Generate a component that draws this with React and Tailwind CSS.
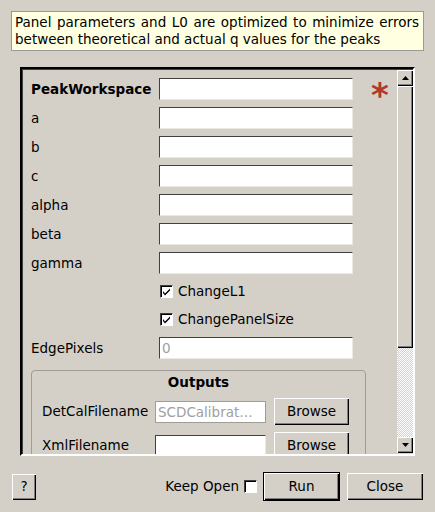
import React from "react";

const raised =
  "bg-[#d4d0c8] shadow-[inset_1px_1px_0_#ffffff,inset_-1px_-1px_0_#000000,inset_-2px_-2px_0_#808080]";
const sunken =
  "bg-white border border-t-[#404040] border-l-[#404040] border-r-[#ece9e4] border-b-[#ece9e4]";

const params = [
  { label: "PeakWorkspace", bold: true, star: true },
  { label: "a" },
  { label: "b" },
  { label: "c" },
  { label: "alpha" },
  { label: "beta" },
  { label: "gamma" },
];

const Arrow = ({ up }) => (
  <svg width="7" height="4" viewBox="0 0 7 4">
    <path d={up ? "M3.5 0L7 4H0Z" : "M0 0H7L3.5 4Z"} fill="#000" />
  </svg>
);

const Check = ({ checked }) => (
  <div className="w-[13px] h-[13px] shrink-0 bg-white border border-t-[#404040] border-l-[#404040] border-r-[#ffffff] border-b-[#ffffff] shadow-[inset_1px_1px_0_#000] flex items-center justify-center">
    {checked && (
      <svg width="9" height="9" viewBox="0 0 9 9">
        <path d="M1 4l2 2.5L8 1.5V3.5L3 8.5 1 6Z" fill="#000" />
      </svg>
    )}
  </div>
);

export default function App() {
  return (
    <div
      className="w-[435px] h-[512px] bg-[#d4d0c8] text-black text-[13.5px] overflow-hidden"
      style={{ fontFamily: '"DejaVu Sans", sans-serif' }}
    >
      {/* description */}
      <div className="ml-[11px] mt-[11px] w-[413px] h-[40px] bg-[#ffffe1] border border-[#9a9a94] pl-[3px] pt-[2px] leading-[17px]">
        <div className="w-[404px] text-justify [text-align-last:justify]">
          Panel parameters and L0 are optimized to minimize errors
        </div>
        <div className="whitespace-nowrap">between theoretical and actual q values for the peaks</div>
      </div>

      {/* scroll area */}
      <div className="ml-[20px] mt-[16px] w-[395px] h-[389px] flex border-2 border-t-[#000] border-l-[#000] border-r-[#fff] border-b-[#fff] shadow-[inset_1px_1px_0_#404040] overflow-hidden">
        <div className="flex-1 pl-[9px] pt-[9px]">
          {params.map((p) => (
            <div key={p.label} className="flex items-center h-[22px] mb-[7px]">
              <div className={"w-[128px] " + (p.bold ? "font-bold" : "")}>{p.label}</div>
              <div className={sunken + " w-[194px] h-[22px]"} />
              {p.star && (
                <div className="ml-[18px] text-[#b0392b] text-[34px] font-bold leading-none mt-[11px]">*</div>
              )}
            </div>
          ))}
          <div className="flex items-center h-[21px] mb-[7px] pl-[129px] gap-[5px]">
            <Check checked />
            <span>ChangeL1</span>
          </div>
          <div className="flex items-center h-[21px] mb-[7px] pl-[129px] gap-[5px]">
            <Check checked />
            <span>ChangePanelSize</span>
          </div>
          <div className="flex items-center h-[22px]">
            <div className="w-[128px]">EdgePixels</div>
            <div className={sunken + " w-[194px] h-[22px] pl-[2px] text-[#a0a0a0] leading-[20px]"}>0</div>
          </div>

          {/* outputs group */}
          <div className="mt-[11px] w-[335px] border border-[#a09d96] rounded-[4px] pb-[20px]">
            <div className="text-center font-bold pt-[3px] leading-[17px]">Outputs</div>
            <div className="flex items-center pl-[10px] mt-[7px] h-[27px]">
              <div className="w-[113px]">DetCalFilename</div>
              <div className="w-[111px] h-[22px] bg-white border border-[#a09d96] pl-[2px] text-[#a0a0a0] leading-[20px] whitespace-nowrap overflow-hidden">
                SCDCalibrat…
              </div>
              <div className={raised + " ml-[8px] w-[75px] h-[27px] flex items-center justify-center"}>Browse</div>
            </div>
            <div className="flex items-center pl-[10px] mt-[7px] h-[27px]">
              <div className="w-[113px]">XmlFilename</div>
              <div className={sunken + " w-[111px] h-[22px]"} />
              <div className={raised + " ml-[8px] w-[75px] h-[27px] flex items-center justify-center"}>Browse</div>
            </div>
          </div>
        </div>

        {/* scrollbar */}
        <div className="w-[16px] flex flex-col pt-[1px] pb-[1px]">
          <div className={raised + " h-[16px] shrink-0 flex items-center justify-center"}>
            <Arrow up />
          </div>
          <div className={raised + " h-[262px] shrink-0"} />
          <div className="flex-1 bg-[repeating-conic-gradient(#ffffff_0_25%,#d4d0c8_0_50%)] bg-[length:2px_2px]" />
          <div className={raised + " h-[16px] shrink-0 flex items-center justify-center"}>
            <Arrow />
          </div>
        </div>
      </div>

      {/* footer */}
      <div className="flex items-center mt-[16px] pl-[12px] pr-[12px]">
        <div className={raised + " w-[24px] h-[26px] flex items-center justify-center"}>?</div>
        <div className="flex-1" />
        <span>Keep Open</span>
        <div className="ml-[5px]">
          <Check />
        </div>
        <div className="ml-[6px] w-[77px] h-[29px] border border-black">
          <div className={raised + " w-full h-full flex items-center justify-center"}>Run</div>
        </div>
        <div className={raised + " ml-[7px] w-[76px] h-[27px] flex items-center justify-center"}>Close</div>
      </div>
    </div>
  );
}
